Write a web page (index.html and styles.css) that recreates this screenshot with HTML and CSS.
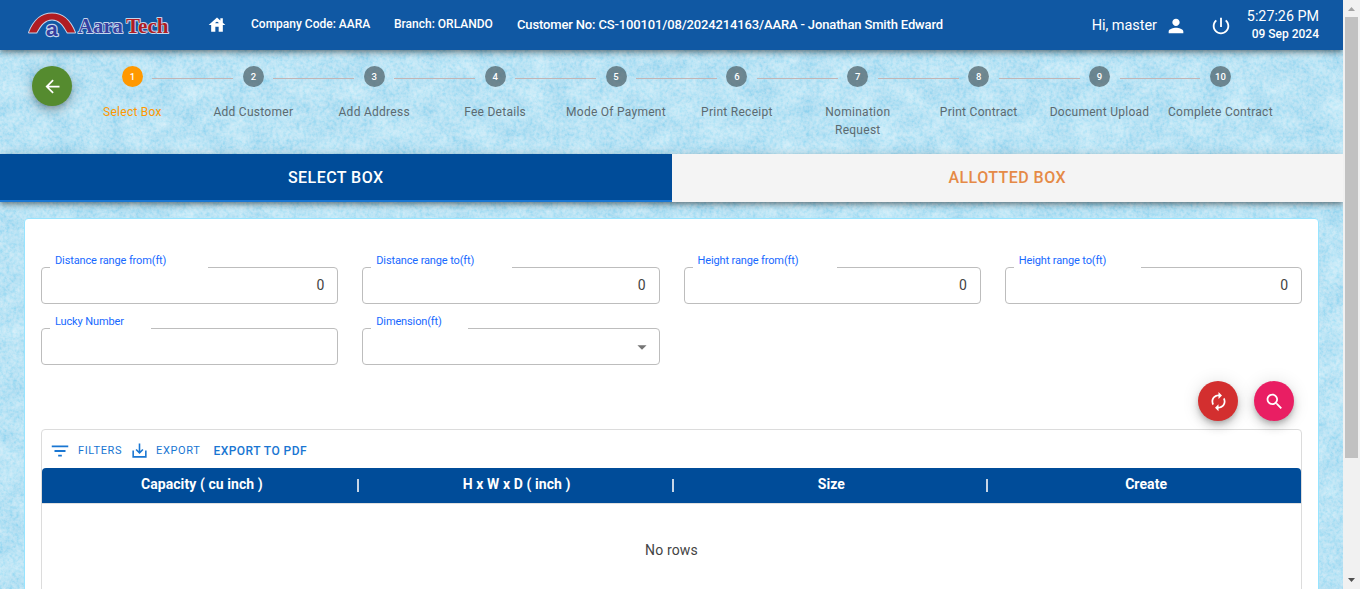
FILE: index.html
```html
<!DOCTYPE html>
<html lang="en">
<head>
<meta charset="utf-8">
<title>Aara Tech - Select Box</title>
<link rel="stylesheet" href="styles.css">
</head>
<body>
<div class="window">
  <div class="app">
    <svg class="paper" aria-hidden="true">
      <filter id="paper" x="0" y="0" width="100%" height="100%" color-interpolation-filters="sRGB">
        <feTurbulence type="fractalNoise" baseFrequency="0.04 0.05" numOctaves="6" seed="8" result="cloud"/>
        <feColorMatrix in="cloud" values="0.17 0.08 0 0 0.605  0.085 0.04 0 0 0.83  0.04 0.02 0 0 0.93  0 0 0 0 1" result="base"/>
        <feTurbulence type="fractalNoise" baseFrequency="0.3" numOctaves="3" seed="3"/>
        <feColorMatrix values="0.8 0 0 0 0.1  0.5 0 0 0 0.25  0.3 0 0 0 0.35  0 0 0 0 1" result="grain"/>
        <feBlend in="grain" in2="base" mode="soft-light"/>
      </filter>
      <rect width="100%" height="100%" filter="url(#paper)"/>
    </svg>

    <header class="topbar">
      <svg class="logo" width="146" height="34" viewBox="0 0 146 34">
        <g stroke="#c3d6ec" stroke-linejoin="round" paint-order="stroke">
          <path d="M3 24.500C8 12 15 5.500 26 5.500s18 6.500 23 19h-7.500C37 16.500 33 11.500 26 11.500S15 16.500 10.500 24.500z" fill="#b01c22" stroke-width="2"/>
          <text class="logo-mark" x="20" y="28" stroke-width="2.400">a</text>
          <text class="logo-aara" x="52" y="25" stroke-width="1.900" textLength="45" lengthAdjust="spacingAndGlyphs">Aara</text>
          <text class="logo-tech" x="100" y="25" stroke-width="1.900" textLength="42.500" lengthAdjust="spacingAndGlyphs">Tech</text>
        </g>
      </svg>
      <svg class="home" width="20" height="20" viewBox="0 0 24 24"><path d="M19 9.3V4h-3v2.6L12 3 2 12h3v8h5v-6h4v6h5v-8h3l-3-2.7zm-9 .7c0-1.1.9-2 2-2s2 .9 2 2h-4z"/></svg>
      <span class="company">Company Code: AARA</span>
      <span class="branch">Branch: ORLANDO</span>
      <span class="customer">Customer No: CS-100101/08/2024214163/AARA - Jonathan Smith Edward</span>
      <span class="greeting">Hi, master</span>
      <svg class="person" width="22" height="22" viewBox="0 0 24 24"><path d="M12 12c2.21 0 4-1.79 4-4s-1.79-4-4-4-4 1.790-4 4 1.790 4 4 4zm0 2c-2.67 0-8 1.340-8 4v2h16v-2c0-2.660-5.330-4-8-4z"/></svg>
      <svg class="power" width="22" height="22" viewBox="0 0 24 24"><path d="M13 3h-2v10h2V3zm4.830 2.170l-1.420 1.420C17.990 7.860 19 9.810 19 12c0 3.870-3.130 7-7 7s-7-3.130-7-7c0-2.190 1.010-4.140 2.580-5.420L6.170 5.170C4.230 6.820 3 9.260 3 12c0 4.970 4.030 9 9 9s9-4.030 9-9c0-2.740-1.230-5.180-3.170-6.830z"/></svg>
      <div class="clock"><span class="time">5:27:26 PM</span><span class="date">09 Sep 2024</span></div>
    </header>

    <section class="progress">
      <button class="fab back" aria-label="Back"><svg width="21" height="21" viewBox="0 0 24 24"><path d="M20 11H7.830l5.590-5.590L12 4l-8 8 8 8 1.410-1.410L7.830 13H20v-2z"/></svg></button>
      <ol class="steps">
        <li class="step active"><span class="dot">1</span><span class="name">Select Box</span></li>
        <li class="step"><span class="dot">2</span><span class="name">Add Customer</span></li>
        <li class="step"><span class="dot">3</span><span class="name">Add Address</span></li>
        <li class="step"><span class="dot">4</span><span class="name">Fee Details</span></li>
        <li class="step"><span class="dot">5</span><span class="name">Mode Of Payment</span></li>
        <li class="step"><span class="dot">6</span><span class="name">Print Receipt</span></li>
        <li class="step"><span class="dot">7</span><span class="name">Nomination Request</span></li>
        <li class="step"><span class="dot">8</span><span class="name">Print Contract</span></li>
        <li class="step"><span class="dot">9</span><span class="name">Document Upload</span></li>
        <li class="step"><span class="dot">10</span><span class="name">Complete Contract</span></li>
      </ol>
    </section>

    <nav class="tabs">
      <button class="tab selected">SELECT BOX</button>
      <button class="tab">ALLOTTED BOX</button>
    </nav>

    <main class="card">
      <form class="fields">
        <div class="field"><label>Distance range from(ft)</label><fieldset><legend class="w158"></legend></fieldset><span class="value">0</span></div>
        <div class="field"><label>Distance range to(ft)</label><fieldset><legend class="w141"></legend></fieldset><span class="value">0</span></div>
        <div class="field"><label>Height range from(ft)</label><fieldset><legend class="w144"></legend></fieldset><span class="value">0</span></div>
        <div class="field"><label>Height range to(ft)</label><fieldset><legend class="w127"></legend></fieldset><span class="value">0</span></div>
        <div class="field"><label>Lucky Number</label><fieldset><legend class="w101"></legend></fieldset></div>
        <div class="field"><label>Dimension(ft)</label><fieldset><legend class="w97"></legend></fieldset><svg class="caret" width="22" height="22" viewBox="0 0 24 24"><path d="M7 10l5 5 5-5z"/></svg></div>
      </form>
      <div class="actions">
        <button class="fab reset" aria-label="Reset"><svg width="21" height="21" viewBox="0 0 24 24"><path d="M12 6v3l4-4-4-4v3c-4.420 0-8 3.580-8 8 0 1.570.460 3.030 1.240 4.260L6.700 14.800c-.450-.830-.700-1.790-.700-2.800 0-3.310 2.690-6 6-6zm6.760 1.740L17.300 9.200c.440.840.700 1.790.700 2.800 0 3.310-2.690 6-6 6v-3l-4 4 4 4v-3c4.420 0 8-3.580 8-8 0-1.570-.460-3.030-1.240-4.260z"/></svg></button>
        <button class="fab search" aria-label="Search"><svg width="21" height="21" viewBox="0 0 24 24"><path d="M15.500 14h-.790l-.280-.270C15.410 12.590 16 11.110 16 9.500 16 5.910 13.090 3 9.500 3S3 5.910 3 9.500 5.910 16 9.500 16c1.610 0 3.090-.590 4.230-1.570l.270.280v.790l5 4.990L20.490 19l-4.990-5zm-6 0C7.010 14 5 11.990 5 9.500S7.010 5 9.500 5 14 7.010 14 9.500 11.990 14 9.500 14z"/></svg></button>
      </div>
      <section class="grid">
        <div class="toolbar">
          <svg class="filter-icon" width="22" height="22" viewBox="0 0 24 24"><path d="M10 18h4v-2h-4v2zM3 6v2h18V6H3zm3 7h12v-2H6v2z"/></svg>
          <span class="filters">FILTERS</span>
          <svg class="export-icon" width="19" height="19" viewBox="0 0 24 24"><path d="M19 12v7H5v-7H3v9h18v-9h-2zm-6 .670l2.590-2.580L17 11.500l-5 5-5-5 1.410-1.410L11 12.670V3h2z"/></svg>
          <span class="export">EXPORT</span>
          <span class="pdf">EXPORT TO PDF</span>
        </div>
        <div class="columns">
          <span class="column">Capacity ( cu inch )</span>
          <span class="column">H x W x D ( inch )</span>
          <span class="column">Size</span>
          <span class="column">Create</span>
        </div>
        <div class="empty">No rows</div>
      </section>
    </main>
  </div>
  <div class="scrollbar">
    <svg width="17" height="17"><path d="M5 11h7l-3.500-4z" fill="#a3a3a3"/></svg>
    <span class="thumb"></span>
    <svg width="17" height="17"><path d="M5 6h7l-3.500 4z" fill="#505050"/></svg>
  </div>
</div>
</body>
</html>
```
FILE: styles.css
```css
* { box-sizing: border-box; }
body {
  margin: 0;
  font-family: Roboto, "Liberation Sans", sans-serif;
  color: #444;
  overflow: hidden;
}
button { font-family: inherit; border: 0; padding: 0; }
svg { flex: none; display: block; }
span { white-space: nowrap; }

.window { display: flex; height: 589px; overflow: hidden; }
.app {
  position: relative;
  width: 1343px;
  display: flex;
  flex-direction: column;
  overflow: hidden;
  background: #bce4f4;
}
.app > * { position: relative; flex: none; }
.app > .paper { position: absolute; inset: 0; width: 100%; height: 100%; }

.topbar {
  height: 50px;
  display: flex;
  align-items: center;
  padding: 0 24px 0 26px;
  background: #1058a3;
  color: #fff;
  fill: #fff;
  box-shadow: 0 2px 4px -1px rgba(0,0,0,.3), 0 4px 5px rgba(0,0,0,.16), 0 1px 10px rgba(0,0,0,.14);
}
.logo-mark { font: bold 21px "Liberation Sans", sans-serif; fill: #3540a0; }
.logo-aara, .logo-tech { font: bold 22px "Liberation Serif", serif; fill: #3540a0; }
.logo-tech { fill: #b01c22; }
.home { margin: 0 24.500px 0 34.500px; }
.company, .branch { font-size: 12px; font-weight: 500; margin-bottom: 2px; }
.company { width: 143px; }
.branch { width: 123px; }
.customer { font-size: 13px; font-weight: 500; letter-spacing: -.145px; margin-bottom: 1px; }
.greeting { margin-left: auto; font-size: 14.500px; letter-spacing: -.05px; }
.person { margin-left: 7.500px; margin-top: 1px; }
.power { margin-left: 23px; margin-top: 1px; }
.clock { display: flex; flex-direction: column; align-items: flex-end; width: 87.500px; }
.time { font-size: 14.300px; line-height: 18px; }
.date { font-size: 12px; line-height: 18px; font-weight: 500; }

.progress { height: 104px; display: flex; padding: 16px 0 0 32px; }
.fab {
  width: 40px;
  height: 40px;
  border-radius: 50%;
  display: flex;
  align-items: center;
  justify-content: center;
  fill: #fff;
  box-shadow: 0 3px 5px -1px rgba(0,0,0,.2), 0 6px 10px rgba(0,0,0,.14), 0 1px 18px rgba(0,0,0,.12);
}
.back { background: #558b2f; }
.reset { background: #d32f2f; }
.search { background: #e91e63; }
.steps { display: flex; list-style: none; margin: 0; padding: 0; width: 1209px; }
.step {
  position: relative;
  width: 120.900px;
  display: flex;
  flex-direction: column;
  align-items: center;
  gap: 16px;
}
.step + .step::before {
  content: "";
  position: absolute;
  top: 12px;
  left: calc(-50% + 20px);
  right: calc(50% + 20px);
  height: 1px;
  background: #c3b5b5;
}
.dot {
  width: 21px;
  height: 21px;
  border-radius: 50%;
  background: rgba(82,102,110,.75);
  color: #fff;
  font-size: 9.500px;
  font-weight: 500;
  line-height: 21px;
  text-align: center;
}
.name {
  width: 108px;
  font-size: 12px;
  line-height: 18px;
  letter-spacing: .27px;
  text-align: center;
  white-space: normal;
  color: #5c6a70;
}
.active .dot { background: #ff9800; }
.active .name { color: #ff9800; }

.tabs {
  height: 48px;
  display: flex;
  box-shadow: 0 2px 4px -1px rgba(0,0,0,.3), 0 4px 5px rgba(0,0,0,.16), 0 1px 10px rgba(0,0,0,.14);
}
.tab {
  flex: 1;
  padding-bottom: 2px;
  background: #f4f4f4;
  color: #e58a47;
  font-size: 16px;
  font-weight: 500;
  letter-spacing: .45px;
}
.tab.selected { background: #004c99; color: #fff; border-bottom: 2px solid #1976d2; padding: 0; }

.card {
  width: 1295px;
  height: 480px;
  margin: 16px 0 0 24px;
  padding: 48px 16px 0;
  border: 1px solid #97e4ff;
  border-radius: 4px;
  background: #fff;
}
.fields {
  display: grid;
  grid-template-columns: repeat(4, 1fr);
  gap: 24px;
}
.field { position: relative; height: 37px; }
.field label {
  position: absolute;
  top: -13px;
  left: 14px;
  font-size: 11px;
  line-height: 14px;
  letter-spacing: -.13px;
  color: #1769ff;
}
.field fieldset {
  position: absolute;
  inset: 0;
  margin: 0;
  padding: 0 8px;
  border: 1px solid #bdbdbd;
  border-radius: 4px;
}
.field legend { padding: 0; height: 1px; }
.w158 { width: 158px; }
.w141 { width: 141px; }
.w144 { width: 144px; }
.w127 { width: 127px; }
.w101 { width: 101px; }
.w97 { width: 97px; }
.value { display: block; padding-right: 14px; line-height: 37px; font-size: 14px; text-align: right; }
.caret { margin: 8px 6.500px 0 auto; fill: #757575; }

.actions { display: flex; justify-content: flex-end; gap: 16px; padding: 16px 8px 8px; }
.grid { border: 1px solid #dcdcdc; border-radius: 4px; height: 220px; }
.toolbar {
  height: 38px;
  display: flex;
  align-items: center;
  padding: 3px 0 0 6.500px;
  font-weight: 500;
  color: #1976d2;
  fill: #1976d2;
}
.filters, .export { font-size: 11px; font-weight: 400; letter-spacing: .65px; }
.filters { width: 52px; margin-left: 7.500px; }
.export { width: 50px; margin-left: 7px; }
.pdf { font-size: 12px; letter-spacing: .45px; margin: 1px 0 0 7.500px; }
.columns { display: flex; height: 35px; background: #004c99; border-radius: 4px 4px 0 0; color: #fff; }
.column {
  position: relative;
  flex: 1;
  padding-left: 5px;
  text-align: center;
  font-size: 14px;
  letter-spacing: .08px;
  line-height: 33px;
  font-weight: 700;
}
.column + .column::before {
  content: "";
  position: absolute;
  left: 0;
  top: 11px;
  width: 2px;
  height: 13px;
  background: #c7d5e6;
}
.empty { border-top: 1px solid #e0e0e0; text-align: center; line-height: 92px; font-size: 14px; letter-spacing: .15px; }

.scrollbar { width: 17px; display: flex; flex-direction: column; background: #f1f1f1; }
.thumb { width: 13px; height: 441px; margin: 0 2px auto; background: #c1c1c1; }
```
